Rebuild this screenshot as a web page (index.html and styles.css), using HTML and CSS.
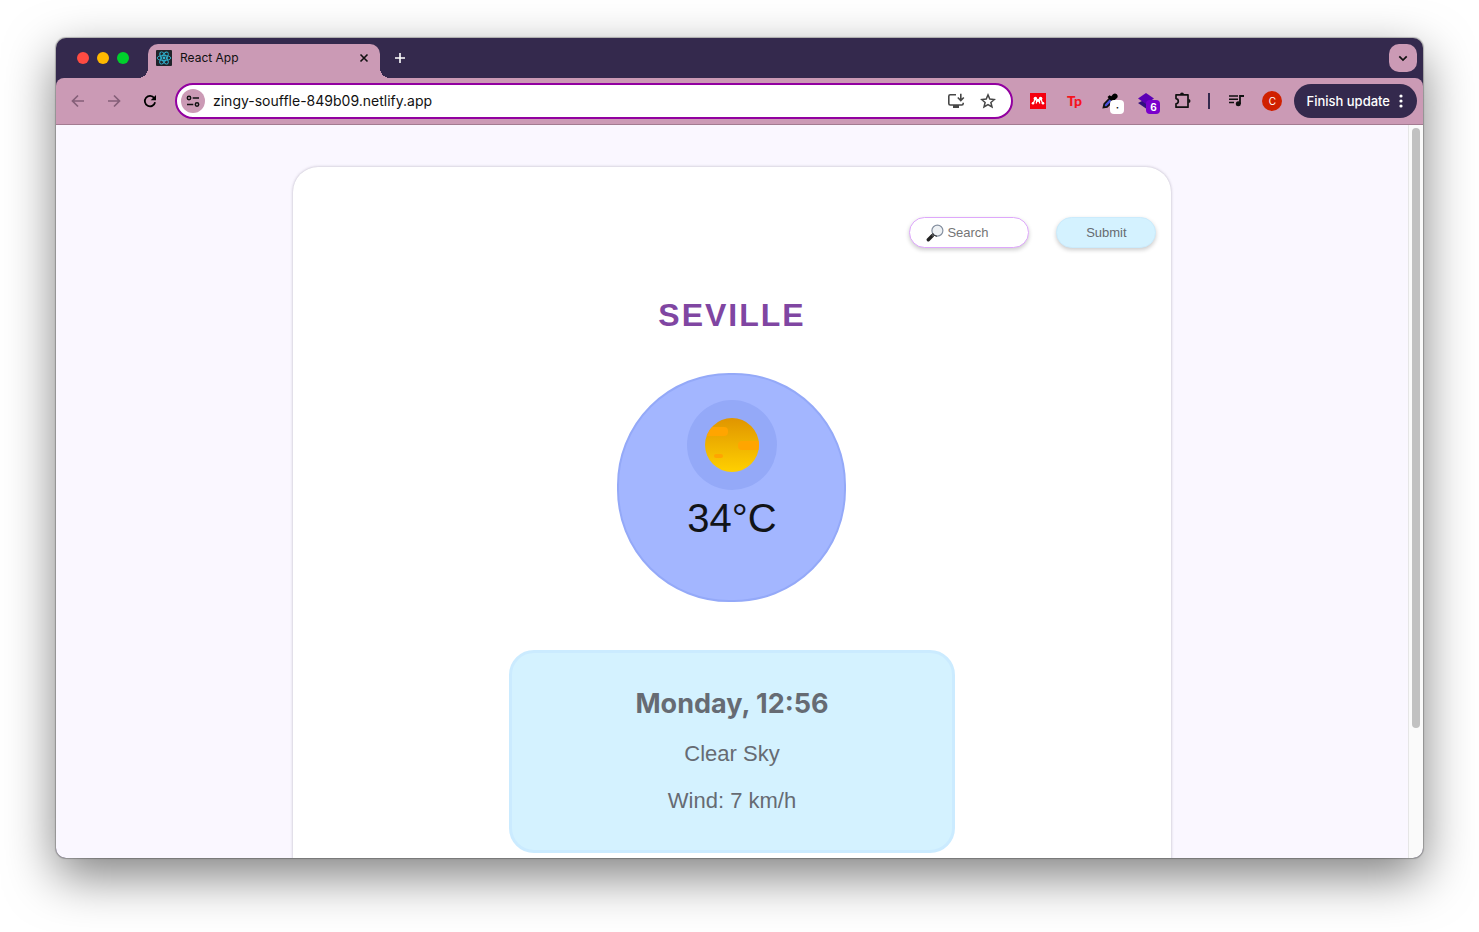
FILE: index.html
```html
<!DOCTYPE html>
<html lang="en">
<head>
<meta charset="utf-8">
<meta name="viewport" content="width=device-width, initial-scale=1">
<title>React App</title>
<link rel="stylesheet" href="styles.css">
</head>
<body>
<div class="window">
  <header class="tab-strip">
    <div class="lights">
      <button class="light light-red" aria-label="Close window"></button>
      <button class="light light-yellow" aria-label="Minimise window"></button>
      <button class="light light-green" aria-label="Zoom window"></button>
    </div>
    <div class="tab">
      <svg class="favicon" width="16" height="16" viewBox="0 0 16 16" aria-hidden="true">
        <rect width="16" height="16" rx="1" fill="#20232a"/>
        <g fill="none" stroke="#2fb4d2" stroke-width="0.9">
          <ellipse cx="8" cy="8" rx="6.8" ry="2.6"/>
          <ellipse cx="8" cy="8" rx="6.8" ry="2.6" transform="rotate(60 8 8)"/>
          <ellipse cx="8" cy="8" rx="6.8" ry="2.6" transform="rotate(120 8 8)"/>
        </g>
        <circle cx="8" cy="8" r="1.4" fill="#2fb4d2"/>
      </svg>
      <span class="tab-title">React App</span>
      <button class="icon-button" aria-label="Close tab">
        <svg width="16" height="16" viewBox="0 0 16 16"><path d="M4.500 4.500l7 7M11.500 4.500l-7 7" stroke="#111" stroke-width="1.600" fill="none"/></svg>
      </button>
    </div>
    <button class="icon-button new-tab" aria-label="New tab">
      <svg width="16" height="16" viewBox="0 0 16 16"><path d="M8 3v10M3 8h10" stroke="#fff" stroke-width="1.600" fill="none"/></svg>
    </button>
    <button class="tab-search" aria-label="Search tabs">
      <svg width="16" height="16" viewBox="0 0 16 16"><path d="M4.300 6.300L8 10l3.700-3.700" stroke="#111" stroke-width="1.700" fill="none"/></svg>
    </button>
  </header>

  <div class="toolbar">
    <div class="nav">
      <button class="icon-button" aria-label="Back">
        <svg width="16" height="16" viewBox="0 0 16 16"><path d="M14 8H3M8 2.500L2.500 8 8 13.500" stroke="#855f78" stroke-width="1.700" fill="none"/></svg>
      </button>
      <button class="icon-button" aria-label="Forward">
        <svg width="16" height="16" viewBox="0 0 16 16"><path d="M2 8h11M8 2.500L13.500 8 8 13.500" stroke="#855f78" stroke-width="1.700" fill="none"/></svg>
      </button>
      <button class="icon-button" aria-label="Reload">
        <svg width="16" height="16" viewBox="0 0 16 16"><path d="M12.200 5A5.200 5.200 0 1 0 13.100 9.300" stroke="#000" stroke-width="1.800" fill="none"/><path d="M14 2v5.300H8.700z" fill="#000"/></svg>
      </button>
    </div>
    <div class="omnibox">
      <button class="site-info" aria-label="Site information">
        <svg width="14" height="14" viewBox="0 0 14 14"><g fill="none" stroke="#111" stroke-width="1.500"><circle cx="3" cy="4" r="1.700"/><path d="M6.700 4H13M1 10.500h6.300"/><circle cx="11" cy="10.500" r="1.700"/></g></svg>
      </button>
      <input class="address" type="text" aria-label="Address" value="zingy-souffle-849b09.netlify.app">
      <button class="icon-button" aria-label="Install app">
        <svg width="18" height="16" viewBox="0 0 18 16"><g fill="none" stroke="#474747" stroke-width="1.600"><path d="M9 1.800H3.200Q1.800 1.800 1.800 3.200V10.600Q1.800 12 3.200 12H14.800Q16.200 12 16.200 10.600V9.800M13.800 0.800v6.400M10.800 4.500l3 3 3-3"/></g><path d="M6 12h6v3H6z" fill="#474747"/></svg>
      </button>
      <button class="icon-button" aria-label="Bookmark this tab">
        <svg width="16" height="16" viewBox="0 0 16 16"><path d="M8 1.900l1.800 4.200 4.600.4-3.500 3 1.100 4.500L8 11.600 4 14l1.100-4.500-3.500-3 4.600-.4z" stroke="#474747" stroke-width="1.500" fill="none"/></svg>
      </button>
    </div>
    <div class="extensions">
      <button class="icon-button" aria-label="Mendeley">
        <svg width="16" height="16" viewBox="0 0 16 16"><rect width="16" height="16" fill="#f5000f"/><g fill="#fff"><circle cx="5.400" cy="5.600" r="1.800"/><circle cx="10.600" cy="5.600" r="1.800"/><circle cx="8" cy="7.400" r="1.300"/><circle cx="3" cy="10.300" r="1.300"/><circle cx="8" cy="7.400" r="1.300"/><circle cx="13" cy="10.300" r="1.300"/></g><path d="M4.700 5.500Q4.600 8.800 3 10.300M11.300 5.500Q11.400 8.800 13 10.300M6.300 6.500Q6.900 8.800 6.200 10.500M9.700 6.500Q9.100 8.800 9.800 10.500" stroke="#fff" stroke-width="1.200" fill="none"/></svg>
      </button>
      <button class="icon-button tp" aria-label="Tp extension">Tp</button>
      <button class="icon-button badged" aria-label="Colour picker">
        <svg width="16" height="16" viewBox="0 0 16 16"><path d="M1.500 14.500l.8-3.500L8 5l3 3-6 6z" fill="#4b50dc" stroke="#111" stroke-width="1.800"/><path d="M5.500 4l2-1.700 1.800 1L11 1.200Q13-.3 14.800 1.200q1.700 1.800.2 3.800l-2 1.700 1 1.800L12 10.500z" fill="#000"/></svg>
        <span class="badge badge-white">·</span>
      </button>
      <button class="icon-button badged" aria-label="Layers, 6">
        <svg width="16" height="16" viewBox="0 0 16 16"><path d="M0 10l8-4 8 4-8 5.500z" fill="#31107d"/><path d="M0 5.500L8 0l8 5.500-8 5.500z" fill="#5b00b5"/></svg>
        <span class="badge badge-purple">6</span>
      </button>
      <button class="icon-button" aria-label="Extensions">
        <svg width="18" height="18" viewBox="0 0 18 18"><path d="M3 2.800h12v12.400H3v-3.400q2.300-.4 2.300-2.600T3 6.600z" stroke="#111" stroke-width="1.700" fill="none" stroke-linejoin="round"/><path d="M7 2.500a2 2 0 0 1 4 0zM15.500 7a2 2 0 0 1 0 4z" fill="#111"/></svg>
      </button>
    </div>
    <span class="divider"></span>
    <button class="icon-button" aria-label="Media controls">
      <svg width="16" height="16" viewBox="0 0 16 16"><path d="M1 3h9M1 6.300h9M1 9.500h5" stroke="#111" stroke-width="1.600"/><circle cx="10.300" cy="10.800" r="2.500" fill="#111"/><path d="M12 11V3H16" stroke="#111" stroke-width="1.800" fill="none"/></svg>
    </button>
    <button class="avatar" aria-label="Profile">C</button>
    <button class="update">Finish update
      <svg width="4" height="16" viewBox="0 0 4 16" aria-hidden="true"><g fill="#fff"><circle cx="2" cy="3" r="1.600"/><circle cx="2" cy="8" r="1.600"/><circle cx="2" cy="13" r="1.600"/></g></svg>
    </button>
  </div>

  <div class="viewport">
    <main class="page">
      <section class="weather">
        <form class="search-form">
          <label class="search">
            <svg width="18" height="18" viewBox="0 0 18 18" aria-hidden="true"><path d="M2.300 15.700L6.500 11.500" stroke="#222" stroke-width="3.400" stroke-linecap="round"/><path d="M6 12l2-2" stroke="#555" stroke-width="1.800"/><circle cx="11.400" cy="6.600" r="5.500" fill="#eef1f4" stroke="#8590a0" stroke-width="1.200"/><path d="M6.500 9q1 3 4.500 3.300" stroke="#333" stroke-width="1" fill="none"/></svg>
            <input type="text" placeholder="Search" aria-label="Search">
          </label>
          <button class="submit" type="submit">Submit</button>
        </form>
        <h1 class="city">SEVILLE</h1>
        <div class="dial">
          <svg width="90" height="90" viewBox="0 0 90 90" role="img" aria-label="Clear sky">
            <defs>
              <linearGradient id="sun" x1="0" y1="0" x2="0" y2="1"><stop offset="0" stop-color="#e09500"/><stop offset="1" stop-color="#ffd000"/></linearGradient>
              <clipPath id="disc"><circle cx="45" cy="45" r="27"/></clipPath>
            </defs>
            <circle cx="45" cy="45" r="45" fill="#94a9f8"/>
            <circle cx="45" cy="45" r="27" fill="url(#sun)"/>
            <g fill="#ffa500" clip-path="url(#disc)"><rect x="10" y="27" width="31" height="9" rx="4"/><rect x="51" y="41" width="30" height="9" rx="4"/><rect x="27" y="54" width="9" height="4" rx="2"/></g>
          </svg>
          <span class="temperature">34°C</span>
        </div>
        <div class="details">
          <h2 class="time">Monday, 12:56</h2>
          <p class="detail">Clear Sky</p>
          <p class="detail">Wind: 7 km/h</p>
        </div>
      </section>
    </main>
    <div class="scroll-track"><div class="scroll-thumb"></div></div>
  </div>
</div>
</body>
</html>
```

FILE: styles.css
```css
* { box-sizing: border-box; }

body {
  margin: 0;
  height: 100vh;
  padding: 38px 56px 74px;
  background: #fff;
  font-family: Inter, "Liberation Sans", sans-serif;
}

button {
  padding: 0;
  border: 0;
  background: none;
  font: inherit;
}

svg { display: block; flex: none; }

.window {
  display: flex;
  flex-direction: column;
  height: 100%;
  overflow: hidden;
  border-radius: 10px;
  background: #34294d;
  box-shadow: 0 0 1px 1px rgba(0, 0, 0, 0.25), 0 18px 50px rgba(0, 0, 0, 0.5);
}

.icon-button {
  display: flex;
  align-items: center;
  justify-content: center;
  width: 20px;
  height: 20px;
  flex: none;
}

/* Tab strip */
.tab-strip {
  display: flex;
  align-items: flex-start;
  padding: 6px 6px 0 21px;
}

.lights {
  display: flex;
  gap: 8px;
  padding-top: 8px;
  margin-right: 19px;
}

.light {
  width: 12px;
  height: 12px;
  border-radius: 50%;
}

.light-red { background: #ff4b42; }
.light-yellow { background: #ffb900; }
.light-green { background: #00d02c; }

.tab {
  position: relative;
  display: flex;
  align-items: center;
  gap: 8px;
  width: 232px;
  height: 34px;
  padding: 0 6px 6px 8px;
  border-radius: 10px 10px 0 0;
  background: #cb9ab5;
}

.tab::before,
.tab::after {
  content: "";
  position: absolute;
  bottom: 0;
  width: 10px;
  height: 10px;
}

.tab::before {
  right: 100%;
  background: radial-gradient(circle at 0 0, transparent 10px, #cb9ab5 10px);
}

.tab::after {
  left: 100%;
  background: radial-gradient(circle at 100% 0, transparent 10px, #cb9ab5 10px);
}

.tab-title {
  flex: 1;
  font-size: 12px;
  line-height: 16px;
  color: #111;
}

.new-tab {
  margin: 4px auto 0 10px;
}

.tab-search {
  display: grid;
  place-items: center;
  width: 28px;
  height: 28px;
  border-radius: 10px;
  background: #cb9ab5;
}

/* Toolbar */
.toolbar {
  display: flex;
  align-items: center;
  height: 47px;
  padding: 0 6px 0 12px;
  border-bottom: 1px solid #a37b91;
  border-radius: 8px 8px 0 0;
  background: #cb9ab5;
}

.nav,
.extensions {
  display: flex;
  gap: 16px;
}

.omnibox {
  display: flex;
  align-items: center;
  gap: 12px;
  flex: 1;
  height: 36px;
  margin: 0 15px;
  padding: 0 13px 0 4px;
  border: 2px solid #9200a0;
  border-radius: 18px;
  background: #fff;
}

.site-info {
  display: grid;
  place-items: center;
  width: 24px;
  height: 24px;
  margin-right: -4px;
  border-radius: 50%;
  background: #cb9ab5;
}

.address {
  flex: 1;
  min-width: 0;
  padding: 0;
  border: 0;
  outline: 0;
  background: none;
  font: 14px/20px Inter, sans-serif;
  color: #111;
}

.tp {
  font: 900 14px/20px Lato, sans-serif;
  color: #f5141e;
}

.badged { position: relative; }

.badge {
  position: absolute;
  top: 9px;
  left: 10px;
  width: 14px;
  height: 14px;
  border-radius: 4px;
  font-size: 10px;
  line-height: 14px;
  font-weight: 700;
  text-align: center;
}

.badge-white { background: #fff; color: #111; }
.badge-purple { background: #7a00cc; color: #fff; }

.divider {
  width: 2px;
  height: 16px;
  margin: 0 16px;
  background: #34294d;
}

.avatar {
  width: 20px;
  height: 20px;
  margin: 0 12px 0 16px;
  border-radius: 50%;
  background: #d02000;
  font-size: 10px;
  line-height: 20px;
  color: #fff;
}

.update {
  display: flex;
  align-items: center;
  gap: 9px;
  height: 34px;
  padding: 0 14px 0 12px;
  border-radius: 17px;
  background: #34294d;
  font-size: 13px;
  font-weight: 500;
  color: #fff;
  white-space: nowrap;
}

/* Page */
.viewport {
  display: flex;
  flex: 1;
  min-height: 0;
}

.page {
  flex: 1;
  overflow: hidden;
  padding-top: 42px;
  background: #faf7ff;
  font-family: "Liberation Sans", Arial, sans-serif;
}

.weather {
  display: flex;
  flex-direction: column;
  align-items: center;
  width: 65%;
  margin: 0 auto;
  padding: 50px 15px 60px;
  border-radius: 25px;
  background: #fff;
  box-shadow: 0 0 3px rgba(60, 50, 80, 0.35);
}

.search-form {
  display: flex;
  align-self: flex-end;
  gap: 27px;
}

.search,
.submit {
  height: 31px;
  border-radius: 16px;
  box-shadow: 0 2px 4px rgba(0, 0, 0, 0.2);
  font-size: 13px;
}

.search {
  display: flex;
  align-items: center;
  gap: 3px;
  width: 120px;
  padding: 0 16px;
  border: 1px solid #dea8fb;
  background: #fff;
}

.search input {
  flex: 1;
  min-width: 0;
  padding: 0;
  border: 0;
  outline: 0;
  background: none;
  font: inherit;
}

.search input::placeholder { color: #757575; }

.submit {
  width: 100px;
  border: 1px solid #cbebfc;
  background: #d4f2ff;
  color: #666b70;
}

.city {
  margin: 48px 0 38px;
  font-size: 32px;
  line-height: 39px;
  letter-spacing: 2px;
  color: #8046a2;
}

.dial {
  display: flex;
  flex-direction: column;
  align-items: center;
  width: 229px;
  height: 229px;
  padding-top: 25px;
  border: 2px solid #94a9f8;
  border-radius: 112px;
  background: #a3b6ff;
}

.temperature {
  margin-top: 4px;
  font-size: 40px;
  line-height: 48px;
  color: #111418;
}

.details {
  width: 446px;
  max-width: 100%;
  margin-top: 48px;
  padding: 31px 16px 34px;
  border: 3px solid #cbebff;
  border-radius: 25px;
  background: #d4f2ff;
  text-align: center;
  color: #666b73;
}

.time {
  margin: 0 0 14px;
  font: 700 27px/40px Inter, sans-serif;
}

.detail {
  margin: 0;
  font-size: 22px;
  line-height: 31px;
}

.detail + .detail { margin-top: 16px; }

.scroll-track {
  width: 15px;
  padding: 3px;
  border-left: 1px solid #e6e6e6;
  background: #fafafa;
}

.scroll-thumb {
  width: 8px;
  height: 82%;
  min-height: 600px;
  border-radius: 4px;
  background: #c1c1c1;
}
```
